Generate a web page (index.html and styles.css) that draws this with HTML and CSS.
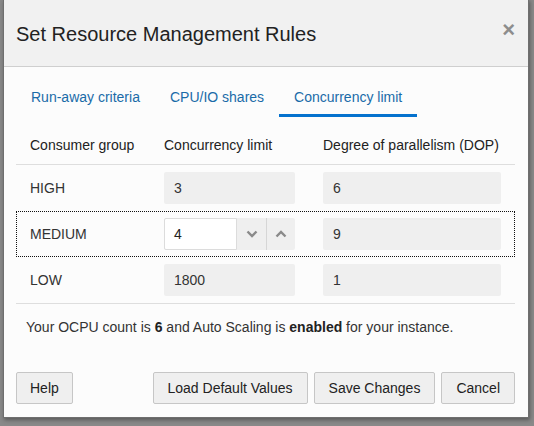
FILE: index.html
```html
<!DOCTYPE html>
<html>
<head>
<meta charset="utf-8">
<link rel="stylesheet" href="styles.css">
</head>
<body>
<div class="dialog">
  <div class="dlg-header">
    <h1 class="dlg-title">Set Resource Management Rules</h1>
    <span class="dlg-close">&times;</span>
  </div>
  <div class="dlg-body">
    <div class="tabs">
      <div class="tab">Run-away criteria</div>
      <div class="tab">CPU/IO shares</div>
      <div class="tab active">Concurrency limit</div>
    </div>
    <div class="grid">
      <div class="grow head">
        <div class="cell">Consumer group</div>
        <div class="cell">Concurrency limit</div>
        <div class="cell">Degree of parallelism (DOP)</div>
      </div>
      <div class="grow">
        <div class="cell">HIGH</div>
        <div class="cell"><div class="field">3</div></div>
        <div class="cell"><div class="field">6</div></div>
      </div>
      <div class="grow focused">
        <div class="cell">MEDIUM</div>
        <div class="cell">
          <div class="spin">
            <div class="spin-input">4</div>
            <div class="spin-btn"><svg width="12" height="8" viewBox="0 0 12 8"><path d="M1.5 1.5 L6 6 L10.5 1.5" fill="none" stroke="#8a8a8a" stroke-width="2.4"/></svg></div>
            <div class="spin-btn"><svg width="12" height="8" viewBox="0 0 12 8"><path d="M1.5 6.5 L6 2 L10.5 6.5" fill="none" stroke="#8a8a8a" stroke-width="2.4"/></svg></div>
          </div>
        </div>
        <div class="cell"><div class="field">9</div></div>
      </div>
      <div class="grow last">
        <div class="cell">LOW</div>
        <div class="cell"><div class="field">1800</div></div>
        <div class="cell"><div class="field">1</div></div>
      </div>
    </div>
    <p class="info">Your OCPU count is <b>6</b> and Auto Scaling is <b>enabled</b> for your instance.</p>
    <div class="buttons">
      <button class="btn help">Help</button>
      <div class="spacer"></div>
      <button class="btn">Load Default Values</button>
      <button class="btn">Save Changes</button>
      <button class="btn">Cancel</button>
    </div>
  </div>
</div>
</body>
</html>
```
FILE: styles.css
```css
html, body {
  margin: 0;
  padding: 0;
  background: #898989;
  font-family: "Liberation Sans", Arial, sans-serif;
  color: #333;
}
body {
  width: 534px;
  height: 426px;
  overflow: hidden;
}
.dialog {
  box-sizing: border-box;
  width: 526px;
  margin: -1px 0 0 3px;
  background: #fcfcfc;
  border: 1px solid #6f6f6f;
  box-shadow: 1px 2px 4px rgba(0,0,0,0.35);
}
.dlg-header {
  display: flex;
  align-items: center;
  justify-content: space-between;
  height: 66px;
  padding: 0 13px 0 12px;
  background: #f1f1f1;
  border-bottom: 1px solid #cfcfcf;
}
.dlg-title {
  margin: 0;
  font-size: 20px;
  font-weight: normal;
  color: #222;
  line-height: 24px;
  padding-top: 1px;
}
.dlg-close {
  font-size: 22px;
  font-weight: bold;
  color: #8d8d8d;
  line-height: 20px;
  margin-top: -6px;
}
.dlg-body {
  padding: 0 13px 13px 12px;
}
.tabs {
  display: flex;
  margin-top: 11px;
}
.tab {
  font-size: 14px;
  line-height: 20px;
  padding: 9px 15px 7px;
  border-bottom: 3px solid transparent;
  color: #1a6ba8;
}
.tab.active {
  border-bottom-color: #0572ce;
}
.grid {
  display: flex;
  flex-direction: column;
}
.grow {
  display: grid;
  grid-template-columns: 134px 159px 206px;
  align-items: center;
  height: 46px;
  font-size: 14px;
}
.grow.head {
  height: auto;
  padding: 18px 0 9px;
  border-bottom: 1px solid #dedede;
  color: #222;
}
.grow.last {
  border-bottom: 1px solid #dedede;
}
.grow.focused {
  outline: 1px dotted #111;
  outline-offset: -1px;
}
.cell {
  padding: 0 14px;
  line-height: 20px;
}
.field {
  height: 32px;
  line-height: 32px;
  background: #efefef;
  border-radius: 2px;
  padding: 0 10px;
  color: #333;
}
.spin {
  display: flex;
  height: 32px;
  background: #efefef;
  border-radius: 2px;
}
.spin-input {
  box-sizing: border-box;
  width: 73px;
  height: 32px;
  line-height: 30px;
  padding: 0 9px;
  background: #fff;
  border: 1px solid #dcdcdc;
  border-radius: 2px 0 0 2px;
  color: #222;
}
.spin-btn {
  box-sizing: border-box;
  width: 29px;
  display: flex;
  align-items: center;
  justify-content: center;
}
.spin-btn + .spin-btn {
  border-left: 1px solid #d6d6d6;
}
.info {
  margin: 0;
  padding: 13px 0 0 10px;
  font-size: 14px;
  line-height: 20px;
  color: #333;
}
.info b {
  color: #222;
}
.buttons {
  display: flex;
  gap: 6px;
  margin-top: 35px;
}
.spacer {
  flex: 1;
}
.btn {
  height: 32px;
  padding: 0 14px;
  font-family: "Liberation Sans", Arial, sans-serif;
  font-size: 14px;
  color: #222;
  background: #efefef;
  border: 1px solid #c6c6c6;
  border-radius: 2px;
}
.btn.help {
  padding: 0 13px;
}
```
